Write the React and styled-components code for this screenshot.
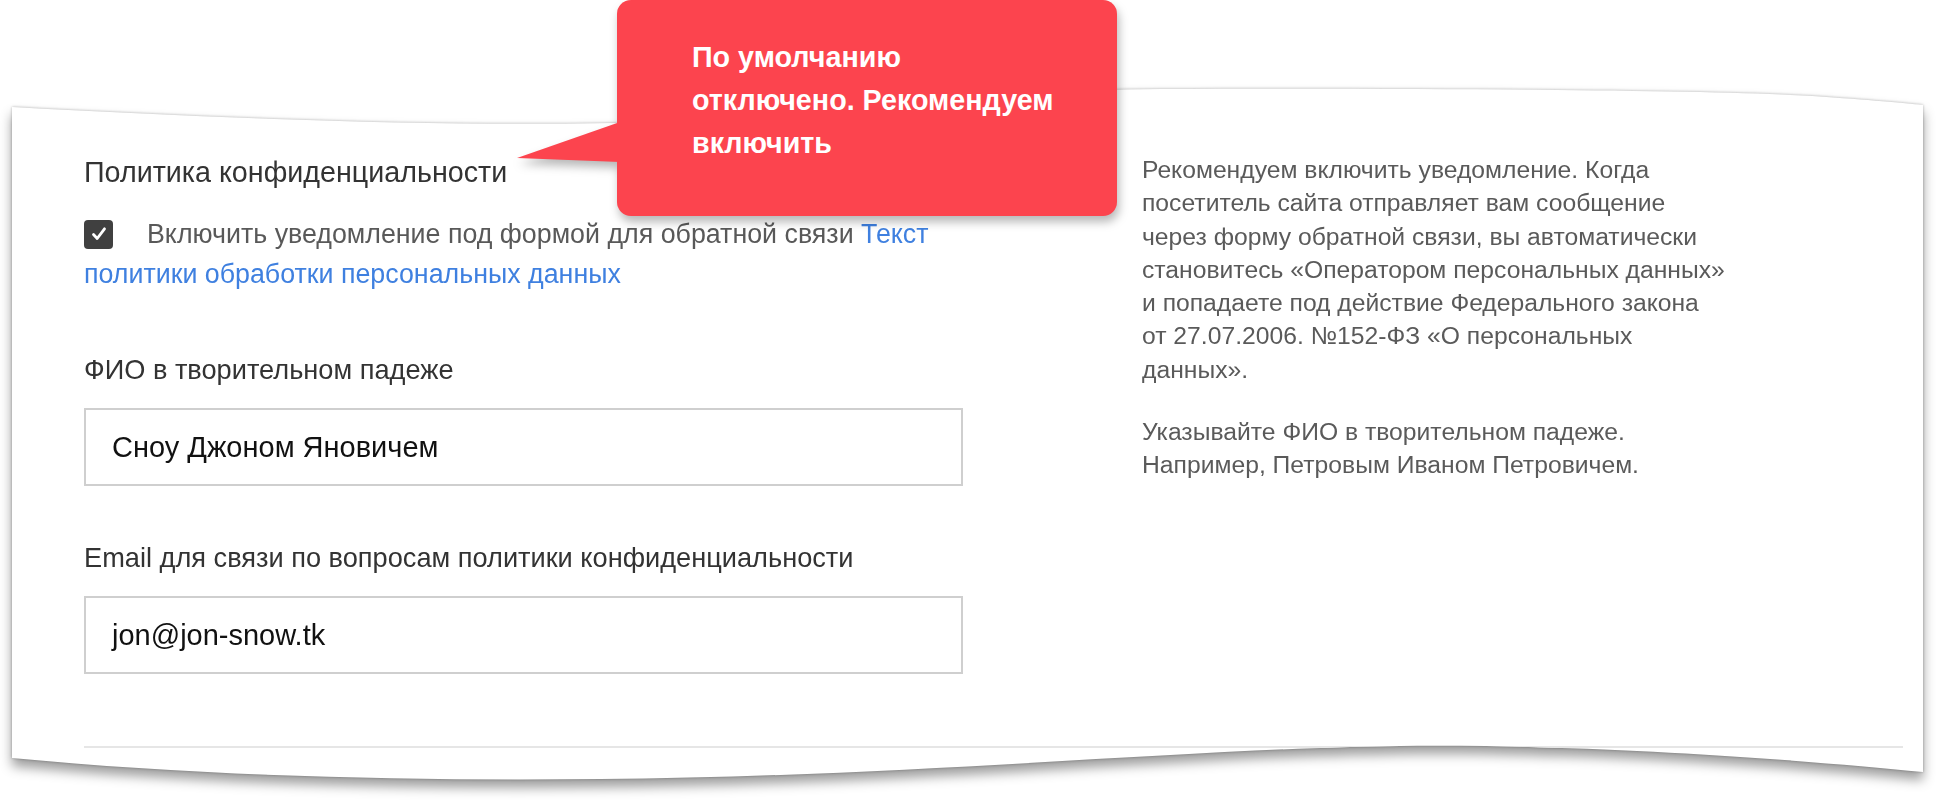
import React from "react";
import styled, { createGlobalStyle } from "styled-components";

const GlobalStyle = createGlobalStyle`
  html, body { margin: 0; padding: 0; background: #ffffff; }
  body { font-family: "Liberation Sans", Arial, Helvetica, sans-serif; }
  * { box-sizing: border-box; }
`;

const SHEET_PATH =
  "M0,19 C200,30 450,40 650,34 C850,28 950,2 1150,1 C1400,0 1700,2 1800,8 C1860,12 1890,15 1911,17 L1911,684 C1788,672 1588,656 1388,658 C1188,660 888,689 588,691 C388,693 188,688 0,670 Z";

const Canvas = styled.div`
  position: relative;
  width: 1936px;
  height: 800px;
  overflow: hidden;
  background: #ffffff;
  padding-top: 88px;
`;

const PaperShadow = styled.div`
  margin-left: 12px;
  width: 1911px;
  filter: drop-shadow(0 0 1.5px rgba(0, 0, 0, 0.3))
    drop-shadow(0 8px 6px rgba(0, 0, 0, 0.38));
`;

const Sheet = styled.div`
  height: 693px;
  background: #ffffff;
  clip-path: path("${SHEET_PATH}");
  padding: 65px 20px 33px 72px;
  display: flex;
  flex-direction: column;
`;

const Columns = styled.div`
  display: grid;
  grid-template-columns: 879px 640px;
  column-gap: 179px;
  align-items: start;
`;

const FormColumn = styled.div`
  display: flex;
  flex-direction: column;
`;

const SectionTitle = styled.div`
  font-size: 28.7px;
  line-height: 39px;
  color: #333333;
`;

const ConsentText = styled.p`
  margin: 22px 0 0;
  font-size: 26.8px;
  line-height: 40px;
  color: #595959;
`;

const CheckBox = styled.span`
  display: inline-block;
  vertical-align: top;
  width: 29px;
  height: 29px;
  margin: 6px 34px 0 0;
  border-radius: 4px;
  background: #404040;

  svg {
    display: block;
    margin: 5px auto 0;
  }
`;

const PolicyLink = styled.a`
  color: #3f80e0;
  text-decoration: none;
`;

const FieldGroup = styled.div`
  display: flex;
  flex-direction: column;
  gap: 20px;
  margin-top: ${(p) => p.$gap}px;
`;

const FieldLabel = styled.label`
  font-size: 27.2px;
  line-height: 36px;
  color: #333333;
`;

const TextField = styled.div`
  height: 78px;
  border: 2px solid #cfcfcf;
  padding: 0 26px;
  display: flex;
  align-items: center;
  font-size: 29px;
  color: #111111;
`;

const HintColumn = styled.div`
  display: flex;
  flex-direction: column;
  gap: 29px;
`;

const Hint = styled.p`
  margin: 0;
  font-size: 24.7px;
  line-height: 33.3px;
  color: #5a5a5a;
  white-space: nowrap;
`;

const Divider = styled.div`
  margin-top: auto;
  height: 2px;
  background: #e6e6e6;
`;

const Callout = styled.div`
  position: absolute;
  left: 617px;
  top: 0;
  width: 500px;
  height: 216px;
  border-radius: 14px;
  background: #fc444e;
  padding: 36px 0 0 75px;
  font-size: 28.7px;
  font-weight: 700;
  line-height: 43px;
  color: #ffffff;
  filter: drop-shadow(2px 6px 5px rgba(0, 0, 0, 0.28));

  &::before {
    content: "";
    position: absolute;
    left: -100px;
    top: 122px;
    width: 103px;
    height: 40px;
    background: #fc444e;
    clip-path: polygon(0 90%, 100% 0, 100% 100%);
  }
`;

function CheckIcon() {
  return (
    <svg width="18" height="18" viewBox="0 0 18 18" aria-hidden="true">
      <path
        d="M3.5 9.5 L7.2 13.5 L14.5 3.8"
        fill="none"
        stroke="#ffffff"
        strokeWidth="2.8"
        strokeLinecap="round"
        strokeLinejoin="round"
      />
    </svg>
  );
}

export default function App() {
  return (
    <>
      <GlobalStyle />
      <Canvas>
        <PaperShadow>
          <Sheet>
            <Columns>
              <FormColumn>
                <SectionTitle>Политика конфиденциальности</SectionTitle>
                <ConsentText>
                  <CheckBox>
                    <CheckIcon />
                  </CheckBox>
                  Включить уведомление под формой для обратной связи{" "}
                  <PolicyLink href="#">
                    Текст
                    <br />
                    политики обработки персональных данных
                  </PolicyLink>
                </ConsentText>
                <FieldGroup $gap={58}>
                  <FieldLabel>ФИО в творительном падеже</FieldLabel>
                  <TextField>Сноу Джоном Яновичем</TextField>
                </FieldGroup>
                <FieldGroup $gap={54}>
                  <FieldLabel>Email для связи по вопросам политики конфиденциальности</FieldLabel>
                  <TextField>jon@jon-snow.tk</TextField>
                </FieldGroup>
              </FormColumn>
              <HintColumn>
                <Hint>
                  Рекомендуем включить уведомление. Когда
                  <br />
                  посетитель сайта отправляет вам сообщение
                  <br />
                  через форму обратной связи, вы автоматически
                  <br />
                  становитесь «Оператором персональных данных»
                  <br />
                  и попадаете под действие Федерального закона
                  <br />
                  от 27.07.2006. №152-ФЗ «О персональных
                  <br />
                  данных».
                </Hint>
                <Hint>
                  Указывайте ФИО в творительном падеже.
                  <br />
                  Например, Петровым Иваном Петровичем.
                </Hint>
              </HintColumn>
            </Columns>
            <Divider />
          </Sheet>
        </PaperShadow>
        <Callout>
          По умолчанию
          <br />
          отключено. Рекомендуем
          <br />
          включить
        </Callout>
      </Canvas>
    </>
  );
}
